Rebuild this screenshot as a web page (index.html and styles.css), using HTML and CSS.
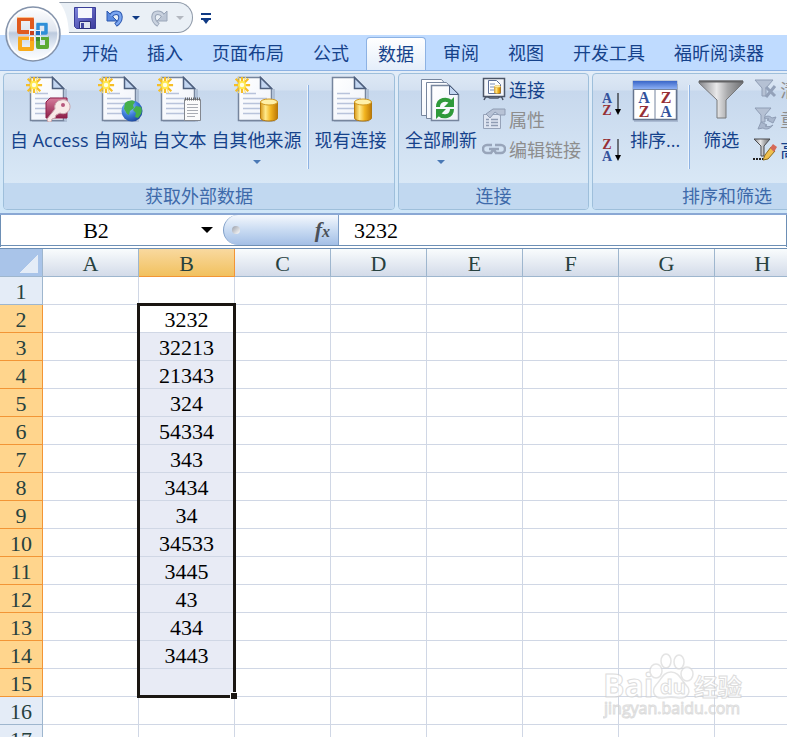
FILE: index.html
```html
<!DOCTYPE html>
<html lang="zh-CN">
<head>
    <meta charset="UTF-8">
    <meta name="viewport" content="width=device-width, initial-scale=1.0">
    <title>Excel</title>
    <link rel="stylesheet" href="styles.css">
</head>
<body>
    <!-- 公用图形 -->
    <svg class="defs" width="0" height="0" aria-hidden="true">
        <defs>
            <linearGradient id="paper" x1="0" y1="0" x2="1" y2="1">
                <stop offset="0" stop-color="#ffffff"/><stop offset="1" stop-color="#eef2fa"/>
            </linearGradient>
            <linearGradient id="gold" x1="0" x2="1" y1="0" y2="0">
                <stop offset="0" stop-color="#d99a1c"/><stop offset=".3" stop-color="#ffe98a"/><stop offset=".6" stop-color="#f2b41f"/><stop offset="1" stop-color="#bd7806"/>
            </linearGradient>
            <linearGradient id="steel" x1="0" x2="1" y1="0" y2="0">
                <stop offset="0" stop-color="#85868a"/><stop offset=".4" stop-color="#e9e9ea"/><stop offset=".65" stop-color="#a9aaac"/><stop offset="1" stop-color="#6f7073"/>
            </linearGradient>
            <radialGradient id="globe" cx=".35" cy=".3" r=".8">
                <stop offset="0" stop-color="#a9d4ff"/><stop offset=".5" stop-color="#3d7edb"/><stop offset="1" stop-color="#1a3f94"/>
            </radialGradient>
            <linearGradient id="orb" x1="0" y1="0" x2="0" y2="1">
                <stop offset="0" stop-color="#ffffff"/><stop offset=".44" stop-color="#dfe5ef"/><stop offset=".48" stop-color="#bccade"/><stop offset=".75" stop-color="#e9eff8"/><stop offset="1" stop-color="#ffffff"/>
            </linearGradient>
            <linearGradient id="floppy" x1="0" y1="0" x2="1" y2="1">
                <stop offset="0" stop-color="#7f86dc"/><stop offset="1" stop-color="#3a3a9c"/>
            </linearGradient>
            <linearGradient id="key" x1="0" y1="0" x2="0" y2="1">
                <stop offset="0" stop-color="#d77d9c"/><stop offset="1" stop-color="#8e1f49"/>
            </linearGradient>
            <linearGradient id="bluebar" x1="0" y1="0" x2="0" y2="1">
                <stop offset="0" stop-color="#3a66c8"/><stop offset="1" stop-color="#8db0f5"/>
            </linearGradient>
            <symbol id="doc" viewBox="0 0 46 46">
                <path d="M7 45h34V13" fill="none" stroke="#8a9ab5" stroke-opacity=".4" stroke-width="2"/>
                <path d="M5.500 1.500h22l11 11v32h-33z" fill="url(#paper)" stroke="#76859d" stroke-width="1.500"/>
                <path d="M27.500 1.500v11h11z" fill="#c3d6f1" stroke="#4d5f7e" stroke-width="1.500"/>
                <path d="M10 17.500h13M10 22.500h24M10 27.500h24M10 32.500h24M10 37.500h19" stroke="#b8c3db" stroke-width="1.500"/>
            </symbol>
            <symbol id="burst" viewBox="0 0 20 20">
                <path d="M10 1v18M1 10h18M3 3l14 14M17 3L3 17" stroke="#f6be26" stroke-width="2.500"/>
                <path d="M6 1l2 6M14 1l-2 6M6 19l2-6M14 19l-2-6" stroke="#ffdf5e" stroke-width="1.200"/>
                <circle cx="10" cy="10" r="4.500" fill="#ffe84d"/>
                <circle cx="10" cy="10" r="2.500" fill="#fffde0"/>
            </symbol>
            <symbol id="drum" viewBox="0 0 18 24">
                <path d="M.5 4v16c0 4 17 4 17 0V4z" fill="url(#gold)" stroke="#b37a10"/>
                <ellipse cx="9" cy="4" rx="8.500" ry="3" fill="#fff0a8" stroke="#d19a22"/>
            </symbol>
        </defs>
    </svg>

    <div class="app">
        <header class="title-bar">
            <button class="orb" aria-label="Office 按钮">
                <svg width="56" height="56" viewBox="0 0 56 56">
                    <circle cx="28" cy="28" r="27" fill="url(#orb)" stroke="#8493ab" stroke-width="1.500"/>
                    <circle cx="28" cy="28" r="25" fill="none" stroke="#fff" stroke-opacity=".8" stroke-width="1.500"/>
                    <g fill="none" stroke-linejoin="round">
                        <path d="M14 13h13v13h-13z" stroke="#e05a1e" stroke-width="4"/>
                        <path d="M33 18h8v9h-8z" stroke="#2f8fd8" stroke-width="3.500"/>
                        <path d="M15 32h12v11h-12z" stroke="#f9ab1b" stroke-width="4"/>
                        <path d="M33 32h9v9h-9z" stroke="#5caa35" stroke-width="4"/>
                        <path d="M12 11.500h16M14 30.500h14" stroke="#ffc08a"/>
                        <path d="M32 16.500h10M32 30.500h11" stroke="#bfe3f0"/>
                    </g>
                    <path d="M24 23h6v6h-6zM31 24h5v5h-5zM24 30h6v5h-6zM31 30h5v5h-5z" fill="#eef2f8"/>
                    <path d="M25 25h4v4h-4z" fill="#c9401c"/>
                    <path d="M31 25h4v4h-4z" fill="#1c6cc0"/>
                    <path d="M25 31h4v4h-4z" fill="#f08c1a"/>
                    <path d="M31 31h4v4h-4z" fill="#3f8d2c"/>
                </svg>
            </button>
            <div class="quick">
                <button aria-label="保存">
                    <svg width="22" height="24" viewBox="0 0 22 24">
                        <path d="M.5 1.500h21v21h-19l-2-2z" fill="url(#floppy)" stroke="#3a3e98"/>
                        <path d="M4 2h14v10H4z" fill="#f4f7fd"/>
                        <path d="M5.500 15.500h11v7h-11z" fill="#dfe3ef" stroke="#2c2f7c"/>
                        <path d="M7 17h3v5H7z" fill="#4347a0"/>
                    </svg>
                </button>
                <button class="undo" aria-label="撤消">
                    <svg width="18" height="18" viewBox="0 0 18 18">
                        <path d="M5 7C7 3 14 2 14.500 8c0 4-2 6-5 8" fill="none" stroke="#2b57ae" stroke-width="4.500"/>
                        <path d="M1 2v10h10z" fill="#5b8be0" stroke="#2b57ae"/>
                        <path d="M5 7C7 3 14 2 14.500 8c0 4-2 6-4.500 7.500" fill="none" stroke="#7ba6f0" stroke-width="2.500"/>
                    </svg>
                </button>
                <button aria-label="撤消列表"><span class="caret dark"></span></button>
                <button class="redo" aria-label="恢复" disabled>
                    <svg width="18" height="18" viewBox="0 0 18 18">
                        <path d="M13 7C11 3 4 2 3.500 8c0 4 2 6 5 8" fill="none" stroke="#9aa6b8" stroke-width="4.500"/>
                        <path d="M17 2v10H7z" fill="#bcc6d5" stroke="#9aa6b8"/>
                        <path d="M13 7C11 3 4 2 3.500 8c0 4 2 6 4.500 7.500" fill="none" stroke="#c9d2df" stroke-width="2.500"/>
                    </svg>
                </button>
                <button aria-label="恢复列表" disabled><span class="caret gray"></span></button>
            </div>
            <button class="customize" aria-label="自定义快速访问工具栏">
                <svg width="10" height="12" viewBox="0 0 10 12">
                    <path d="M0 0h10v2H0zM0 5h10v2H0zM2 7h6l-3 4z" fill="#0f3a84"/>
                </svg>
            </button>
        </header>

        <nav class="tabs">
            <a href="#">开始</a>
            <a href="#">插入</a>
            <a href="#">页面布局</a>
            <a href="#">公式</a>
            <a href="#" class="active">数据</a>
            <a href="#">审阅</a>
            <a href="#">视图</a>
            <a href="#">开发工具</a>
            <a href="#">福昕阅读器</a>
        </nav>

        <section class="ribbon">
            <div class="group">
                <div class="tools">
                    <button class="big">
                        <svg width="46" height="46" viewBox="1 0 46 46">
                            <use href="#doc" width="46" height="46"/>
                            <use href="#burst" width="18" height="18"/>
                            <path d="M23 24l2-2h17v20H21V26z" fill="url(#key)" stroke="#8e1f49"/>
                            <path d="M36 24a7 7 0 1 1-1 13l-4 2-1 3-3 1-1 3h-3l-1-3 8-10a7 7 0 0 1 6-9z" fill="#f8e9e7" stroke="#c8a4ac"/>
                            <circle cx="38" cy="29" r="2" fill="#b8587c"/>
                        </svg>
                        <span>自 Access</span>
                    </button>
                    <button class="big">
                        <svg width="46" height="46" viewBox="1 0 46 46">
                            <use href="#doc" width="46" height="46"/>
                            <use href="#burst" width="18" height="18"/>
                            <circle cx="35" cy="35" r="10.500" fill="url(#globe)"/>
                            <path d="M28 27c4-3 8-3 10-1l-2 3 1 3-4 3-1 4c-3-1-3-4-5-6zM39 30l5 1c2 4 0 8-3 11l-3-1 1-4-3-3z" fill="#46b04a"/>
                        </svg>
                        <span>自网站</span>
                    </button>
                    <button class="big">
                        <svg width="46" height="46" viewBox="1 0 46 46">
                            <use href="#doc" width="46" height="46"/>
                            <use href="#burst" width="18" height="18"/>
                            <path d="M28.500 23.500h16v21h-16z" fill="#fbfbfb" stroke="#83878f"/>
                            <path d="M29 23h16" stroke="#666" stroke-width="3" stroke-dasharray="1 1"/>
                            <path d="M31 28.500h11M31 31.500h11M31 34.500h11M31 37.500h11M31 40.500h8" stroke="#a9acb3"/>
                        </svg>
                        <span>自文本</span>
                    </button>
                    <button class="big">
                        <svg width="46" height="46" viewBox="1 0 46 46">
                            <use href="#doc" width="46" height="46"/>
                            <use href="#burst" width="18" height="18"/>
                            <use href="#drum" x="27" y="22" width="18" height="24"/>
                        </svg>
                        <span>自其他来源</span>
                        <i class="caret"></i>
                    </button>
                    <div class="split"></div>
                    <button class="big">
                        <svg width="46" height="46" viewBox="1 0 46 46">
                            <use href="#doc" width="46" height="46"/>
                            <use href="#drum" x="27" y="22" width="18" height="24"/>
                        </svg>
                        <span>现有连接</span>
                    </button>
                </div>
                <h2>获取外部数据</h2>
            </div>

            <div class="group">
                <div class="tools">
                    <button class="big">
                        <svg width="46" height="46" viewBox="0 0 46 46">
                            <g fill="url(#paper)" stroke="#76859d">
                                <path d="M3.500 3.500h20l7 8v28h-27z"/>
                                <path d="M8.500 6.500h20l7 8v28h-27z"/>
                                <path d="M13.500 9.500h18l9 9v26h-27z" stroke-width="1.500"/>
                            </g>
                            <path d="M31.500 9.500v9h9z" fill="#c3d6f1" stroke="#4d5f7e"/>
                            <path d="M20 31c0-8 9-9 13-5M34 33c0 8-9 9-13 5" fill="none" stroke="#2f9a3b" stroke-width="4"/>
                            <path d="M36 21v10H26zM18 43V33h10z" fill="#2f9a3b"/>
                        </svg>
                        <span>全部刷新</span>
                        <i class="caret"></i>
                    </button>
                    <div class="stack">
                        <button class="small">
                            <svg width="24" height="24" viewBox="0 0 24 24">
                                <path d="M1.500 1.500h21v18h-21z" fill="#f5f7fb" stroke="#4b5567" stroke-width="1.500"/>
                                <path d="M2 23c2-5 4-3 6-2h8c2-2 4-2 5 2" fill="none" stroke="#4b5567" stroke-width="1.500"/>
                                <path d="M6.500 3.500h8l4 4v9h-12z" fill="#fff" stroke="#5e7097"/>
                                <path d="M8 7h5M8 10h4M8 13h4" stroke="#7b8fb8"/>
                                <use href="#drum" x="12" y="8" width="7" height="9"/>
                            </svg>
                            <span>连接</span>
                        </button>
                        <button class="small" disabled>
                            <svg width="24" height="24" viewBox="0 0 24 24">
                                <path d="M1.500 7.500h17v14h-17z" fill="#dfe6f2" stroke="#96a3b9"/>
                                <path d="M4 12.500h3M9 12.500h7M4 15.500h3M9 15.500h7M4 18.500h3M9 18.500h7" stroke="#8f9cb3" stroke-width="1.500"/>
                                <path d="M4 7l7-5h12v6h-6l-4-3-5 6z" fill="#b7c2d5" stroke="#8f9cb3"/>
                            </svg>
                            <span>属性</span>
                        </button>
                        <button class="small" disabled>
                            <svg width="24" height="24" viewBox="0 0 24 24">
                                <path d="M10 8H5a4 4 0 0 0 0 8h4l2-3M13 8h6a4 4 0 0 1 0 8h-5l-2-3M7 12h10" fill="none" stroke="#98a5ba" stroke-width="2.500"/>
                            </svg>
                            <span>编辑链接</span>
                        </button>
                    </div>
                </div>
                <h2>连接</h2>
            </div>

            <div class="group wide">
                <div class="tools">
                    <div class="sorts">
                        <button aria-label="升序">
                            <svg width="20" height="26" viewBox="0 0 20 26">
                                <text class="letter blue" x="6" y="12">A</text>
                                <text class="letter red" x="6" y="24">Z</text>
                                <path d="M17 2v18" stroke="#000"/><path d="M14 18h6l-3 6z"/>
                            </svg>
                        </button>
                        <button aria-label="降序">
                            <svg width="20" height="26" viewBox="0 0 20 26">
                                <text class="letter red" x="6" y="12">Z</text>
                                <text class="letter blue" x="6" y="24">A</text>
                                <path d="M17 2v18" stroke="#000"/><path d="M14 18h6l-3 6z"/>
                            </svg>
                        </button>
                    </div>
                    <button class="big">
                        <svg width="46" height="46" viewBox="0 0 46 46">
                            <path d="M2 45h43V8" fill="none" stroke="#8a9ab5" stroke-opacity=".5" stroke-width="2"/>
                            <path d="M1.500 5.500h43v38h-43z" fill="#fff" stroke="#66758e" stroke-width="1.500"/>
                            <path d="M1 5h44v8H1z" fill="url(#bluebar)"/>
                            <path d="M1 13.500h44M23 13v31" stroke="#75849e"/>
                            <text class="letter large blue" x="12" y="27">A</text>
                            <text class="letter large red" x="12" y="41">Z</text>
                            <text class="letter large red" x="34" y="27">Z</text>
                            <text class="letter large blue" x="34" y="41">A</text>
                        </svg>
                        <span>排序...</span>
                    </button>
                    <div class="split"></div>
                    <button class="big">
                        <svg width="46" height="46" viewBox="0 0 46 46">
                            <path d="M1 5h44v2L28 24v18h-9V24L1 7z" fill="url(#steel)" stroke="#77787b"/>
                            <path d="M1 5.500h44" stroke="#626365" stroke-width="2"/>
                        </svg>
                        <span>筛选</span>
                    </button>
                    <div class="stack">
                        <button class="small" disabled>
                            <svg width="24" height="24" viewBox="0 0 24 24">
                                <path d="M2 3h18l-7 8v8H9v-8z" fill="#b5c1d4" stroke="#8f9db4"/>
                                <path d="M13 10l9 9M22 9l-9 11" stroke="#93a1b9" stroke-width="3"/>
                            </svg>
                            <span>清除</span>
                        </button>
                        <button class="small" disabled>
                            <svg width="24" height="24" viewBox="0 0 24 24">
                                <path d="M2 1h16l-6 7v7H8V8z" fill="#b5c1d4" stroke="#8f9db4"/>
                                <path d="M11 11c3-3 6-2 8 0l4-1-3 6-6-3 2-1c-2-1-3 0-5-1zM20 18c-3 4-7 5-10 3l-5 1 3-7 6 3-2 1c3 1 5 1 8-1z" fill="#a9b7cd" stroke="#8f9db4"/>
                            </svg>
                            <span>重新应用</span>
                        </button>
                        <button class="small">
                            <svg width="24" height="24" viewBox="0 0 24 24">
                                <path d="M1 2h16l-6 7v10H8V9z" fill="url(#steel)" stroke="#4a4b4e"/>
                                <path d="M12 18l-2 5 5-1 7-8-4-4z" fill="#efc04e" stroke="#8b6a1d"/>
                                <path d="M17 11l3-4 4 3-3 5z" fill="#d56a5a"/>
                                <path d="M0 22h10" stroke="#222" stroke-width="2" stroke-dasharray="2 1"/>
                            </svg>
                            <span>高级</span>
                        </button>
                    </div>
                </div>
                <h2>排序和筛选</h2>
            </div>
        </section>

        <div class="formula-bar">
            <input class="name-box" type="text" value="B2" aria-label="名称框">
            <button class="name-list" aria-label="名称列表"><span class="caret black"></span></button>
            <div class="fx-wrap">
                <i class="dot"></i>
                <button class="fx" aria-label="插入函数"><i>f</i><sub>x</sub></button>
            </div>
            <input class="formula" type="text" value="3232" aria-label="编辑栏">
        </div>

        <main class="sheet">
            <table>
                <thead>
                    <tr><th class="corner"></th><th>A</th><th class="on">B</th><th>C</th><th>D</th><th>E</th><th>F</th><th>G</th><th>H</th></tr>
                </thead>
                <tbody>
                    <tr><th>1</th><td></td><td></td><td></td><td></td><td></td><td></td><td></td><td></td></tr>
                    <tr class="on"><th>2</th><td></td><td class="first">3232</td><td></td><td></td><td></td><td></td><td></td><td></td></tr>
                    <tr class="on"><th>3</th><td></td><td class="sel">32213</td><td></td><td></td><td></td><td></td><td></td><td></td></tr>
                    <tr class="on"><th>4</th><td></td><td class="sel">21343</td><td></td><td></td><td></td><td></td><td></td><td></td></tr>
                    <tr class="on"><th>5</th><td></td><td class="sel">324</td><td></td><td></td><td></td><td></td><td></td><td></td></tr>
                    <tr class="on"><th>6</th><td></td><td class="sel">54334</td><td></td><td></td><td></td><td></td><td></td><td></td></tr>
                    <tr class="on"><th>7</th><td></td><td class="sel">343</td><td></td><td></td><td></td><td></td><td></td><td></td></tr>
                    <tr class="on"><th>8</th><td></td><td class="sel">3434</td><td></td><td></td><td></td><td></td><td></td><td></td></tr>
                    <tr class="on"><th>9</th><td></td><td class="sel">34</td><td></td><td></td><td></td><td></td><td></td><td></td></tr>
                    <tr class="on"><th>10</th><td></td><td class="sel">34533</td><td></td><td></td><td></td><td></td><td></td><td></td></tr>
                    <tr class="on"><th>11</th><td></td><td class="sel">3445</td><td></td><td></td><td></td><td></td><td></td><td></td></tr>
                    <tr class="on"><th>12</th><td></td><td class="sel">43</td><td></td><td></td><td></td><td></td><td></td><td></td></tr>
                    <tr class="on"><th>13</th><td></td><td class="sel">434</td><td></td><td></td><td></td><td></td><td></td><td></td></tr>
                    <tr class="on"><th>14</th><td></td><td class="sel">3443</td><td></td><td></td><td></td><td></td><td></td><td></td></tr>
                    <tr class="on"><th>15</th><td></td><td class="sel"></td><td></td><td></td><td></td><td></td><td></td><td></td></tr>
                    <tr><th>16</th><td></td><td></td><td></td><td></td><td></td><td></td><td></td><td></td></tr>
                    <tr><th>17</th><td></td><td></td><td></td><td></td><td></td><td></td><td></td><td></td></tr>
                </tbody>
            </table>
            <div class="selection"></div>
            <svg class="watermark" width="144" height="70" viewBox="0 0 144 70">
                <text class="logo" x="0" y="46">Bai</text>
                <g fill="#fff" stroke="#d9d9d9" stroke-width="1.500">
                    <ellipse cx="53" cy="20" rx="6" ry="7"/>
                    <ellipse cx="63" cy="10" rx="5" ry="7"/>
                    <ellipse cx="76" cy="11" rx="5" ry="7"/>
                    <ellipse cx="84" cy="23" rx="6" ry="7"/>
                    <path d="M68 21c8 0 10 8 15 13 6 6 2 14-7 13-5-1-11-1-16 0-9 1-12-7-7-13 5-5 7-13 15-13z"/>
                </g>
                <text class="du" x="57" y="43">du</text>
                <text class="exp" x="91" y="45">经验</text>
                <text class="url" x="1" y="63">jingyan.baidu.com</text>
            </svg>
        </main>
    </div>
</body>
</html>
```
FILE: styles.css
```css
* {
    margin: 0;
    padding: 0;
    box-sizing: border-box;
}

body {
    font-family: "Open Sans", "Noto Sans CJK SC", sans-serif;
    font-size: 18px;
    font-weight: 400;
    color: #15428b;
    background: #fff;
    overflow: hidden;
}

button,
input {
    font: inherit;
    color: inherit;
    border: none;
    background: none;
    outline: none;
}

a {
    color: inherit;
    text-decoration: none;
}

svg {
    display: block;
}

.defs {
    position: absolute;
}

.app {
    height: 100vh;
    display: flex;
    flex-direction: column;
}

.caret {
    display: block;
    width: 0;
    height: 0;
    border: 4px solid transparent;
    border-top-color: #4a79b5;
    border-bottom: none;
}

.caret.dark {
    border-top-color: #0f3a84;
}

.caret.gray {
    border-top-color: #b3b8c0;
}

.caret.black {
    border-width: 6px 6px 0;
    border-top-color: #000;
}

/* 标题栏 */
.title-bar {
    position: relative;
    flex: none;
    height: 35px;
    padding-left: 59px;
    display: flex;
    align-items: flex-start;
}

.orb {
    position: absolute;
    left: 5px;
    top: 6px;
    z-index: 2;
}

.quick {
    height: 31px;
    width: 134px;
    margin-top: 2px;
    padding-left: 15px;
    display: flex;
    align-items: center;
    gap: 8px;
    background: #eaf0f6;
    border: 1px solid #8e99a8;
    border-left: none;
    border-radius: 0 16px 16px 0;
    clip-path: path("M0 0H140V31H10C9 18 7 8 0 0z");
}

.undo,
.redo {
    margin-left: 2px;
}

.customize {
    margin: 13px 0 0 8px;
}

/* 选项卡 */
.tabs {
    flex: none;
    height: 35px;
    padding: 2px 0 0 70px;
    display: flex;
    gap: 5px;
    white-space: nowrap;
    background: #bfdbff;
}

.tabs a {
    flex: none;
    padding: 0 12px;
    line-height: 33px;
}

.tabs .active {
    padding: 0 11px;
    background: linear-gradient(#fff, #e4eefa);
    border: 1px solid #8db2e3;
    border-bottom: none;
    border-radius: 4px 4px 0 0;
}

/* 功能区 */
.ribbon {
    flex: none;
    height: 145px;
    padding: 2px 3px 3px;
    display: flex;
    gap: 3px;
    background: linear-gradient(#e3edf8, #cfe6f8);
    border-top: 1px solid #8db2e3;
    border-bottom: 2px solid #8aa8d4;
    overflow: hidden;
}

.group {
    flex: none;
    width: 392px;
    display: flex;
    flex-direction: column;
    border: 1px solid #9ebfdb;
    border-radius: 4px;
    overflow: hidden;
    background: linear-gradient(#dde8f5 0, #d4e1f1 16px, #c7d8ed 17px, #d9e8f6 110px);
}

.group:nth-child(2) {
    width: 191px;
}

.group.wide {
    width: 270px;
}

.group h2 {
    height: 26px;
    line-height: 26px;
    font-size: 18px;
    font-weight: 400;
    text-align: center;
    color: #3e6aaa;
    background: #c1d8f0;
}

.tools {
    flex: 1;
    padding-left: 6px;
    display: flex;
    gap: 5px;
    white-space: nowrap;
}

.big {
    padding-top: 2px;
    display: flex;
    flex-direction: column;
    align-items: center;
    justify-content: flex-start;
}

.big span {
    height: 38px;
    line-height: 36px;
}

.split {
    width: 2px;
    height: 84px;
    margin: 11px 1px 0 0;
    background: #8db2e3;
    border-left: 1px solid #eef5fc;
}

.stack {
    display: flex;
    flex-direction: column;
}

.small {
    height: 30px;
    display: flex;
    align-items: center;
    gap: 3px;
}

.small:disabled {
    color: #8d8d8d;
}

.wide .stack {
    margin-left: 4px;
}

.wide .split {
    margin: 11px 3px 0;
}

.sorts {
    width: 26px;
    padding: 17px 0 0 2px;
    display: flex;
    flex-direction: column;
    gap: 20px;
}

.letter {
    font: bold 14px "Liberation Serif", serif;
    text-anchor: middle;
}

.letter.large {
    font-size: 16px;
}

.blue {
    fill: #34529c;
}

.red {
    fill: #962f35;
}

/* 编辑栏 */
.formula-bar {
    flex: none;
    height: 34px;
    display: flex;
    font: 22px "Liberation Serif", "Noto Sans CJK SC", serif;
    color: #000;
    border: 1px solid #6d8fb5;
    border-top: none;
    border-bottom: 4px double #6d8fb5;
}

.name-box {
    width: 190px;
    padding-top: 2px;
    text-align: center;
}

.name-list {
    width: 32px;
    display: flex;
    align-items: center;
    justify-content: center;
}

.fx-wrap {
    width: 116px;
    padding: 0 8px;
    display: flex;
    align-items: center;
    justify-content: space-between;
    background: linear-gradient(#f4f8fd, #c9dbf2 50%, #a3bfe6);
    border: 1px solid #7f9fc8;
    border-width: 0 1px;
    border-radius: 15px 0 0 15px;
}

.dot {
    width: 8px;
    height: 8px;
    border-radius: 50%;
    background: linear-gradient(135deg, #999ea8, #fff);
}

.fx {
    font: bold 22px "Liberation Serif", serif;
    line-height: 26px;
    color: #4b5058;
}

.fx sub {
    font-size: 16px;
    font-style: italic;
    line-height: 0;
    vertical-align: baseline;
}

.formula {
    flex: 1;
    min-width: 0;
    padding: 2px 0 0 15px;
}

/* 表格 */
.sheet {
    position: relative;
    flex: 1;
    min-height: 0;
    overflow: hidden;
    font: 22px "Liberation Serif", serif;
    color: #000;
}

table {
    table-layout: fixed;
    width: 811px;
    border-collapse: separate;
    border-spacing: 0;
}

th,
td {
    width: 96px;
    height: 28px;
    padding-top: 3px;
    line-height: 24px;
    text-align: center;
    font-weight: normal;
    border-right: 1px solid #d0d7e5;
    border-bottom: 1px solid #d0d7e5;
}

thead th {
    color: #27413e;
    background: linear-gradient(#f9fcfd, #d3dbe9);
    border-color: #9eb6ce;
}

thead .on {
    background: linear-gradient(#f9d99f, #f1c15f);
    border-color: #f29536;
}

thead .corner {
    width: 43px;
    background: linear-gradient(135deg, transparent 50%, #e4ecf7 50%) 19px 5px / 19px 19px no-repeat #a9c4e9;
    border-color: #9eb6ce;
}

tbody th {
    color: #27413e;
    background: #e4ecf7;
    border-color: #9eb6ce;
}

.on th {
    background: #ffd58d;
    border-color: #f29536;
}

.sel {
    background: #e8ebf5;
}

.selection {
    position: absolute;
    left: 137px;
    top: 54px;
    width: 99px;
    height: 395px;
    border: 3px solid #1a1612;
    pointer-events: none;
}

.selection::after {
    content: "";
    position: absolute;
    right: -4px;
    bottom: -4px;
    width: 6px;
    height: 6px;
    background: #1a1612;
    border: solid #fff;
    border-width: 1px 0 0 1px;
}

.watermark {
    position: absolute;
    right: 40px;
    bottom: 16px;
    opacity: .7;
}

.watermark text {
    font-family: "Open Sans", "Noto Sans CJK SC", sans-serif;
    font-weight: bold;
    fill: #fff;
    stroke: #cfcfcf;
    stroke-width: 1px;
}

.watermark .logo {
    font-size: 32px;
}

.watermark .du {
    font-size: 20px;
}

.watermark .exp {
    font-size: 24px;
}

.watermark .url {
    font-size: 16px;
    font-weight: normal;
}
```
